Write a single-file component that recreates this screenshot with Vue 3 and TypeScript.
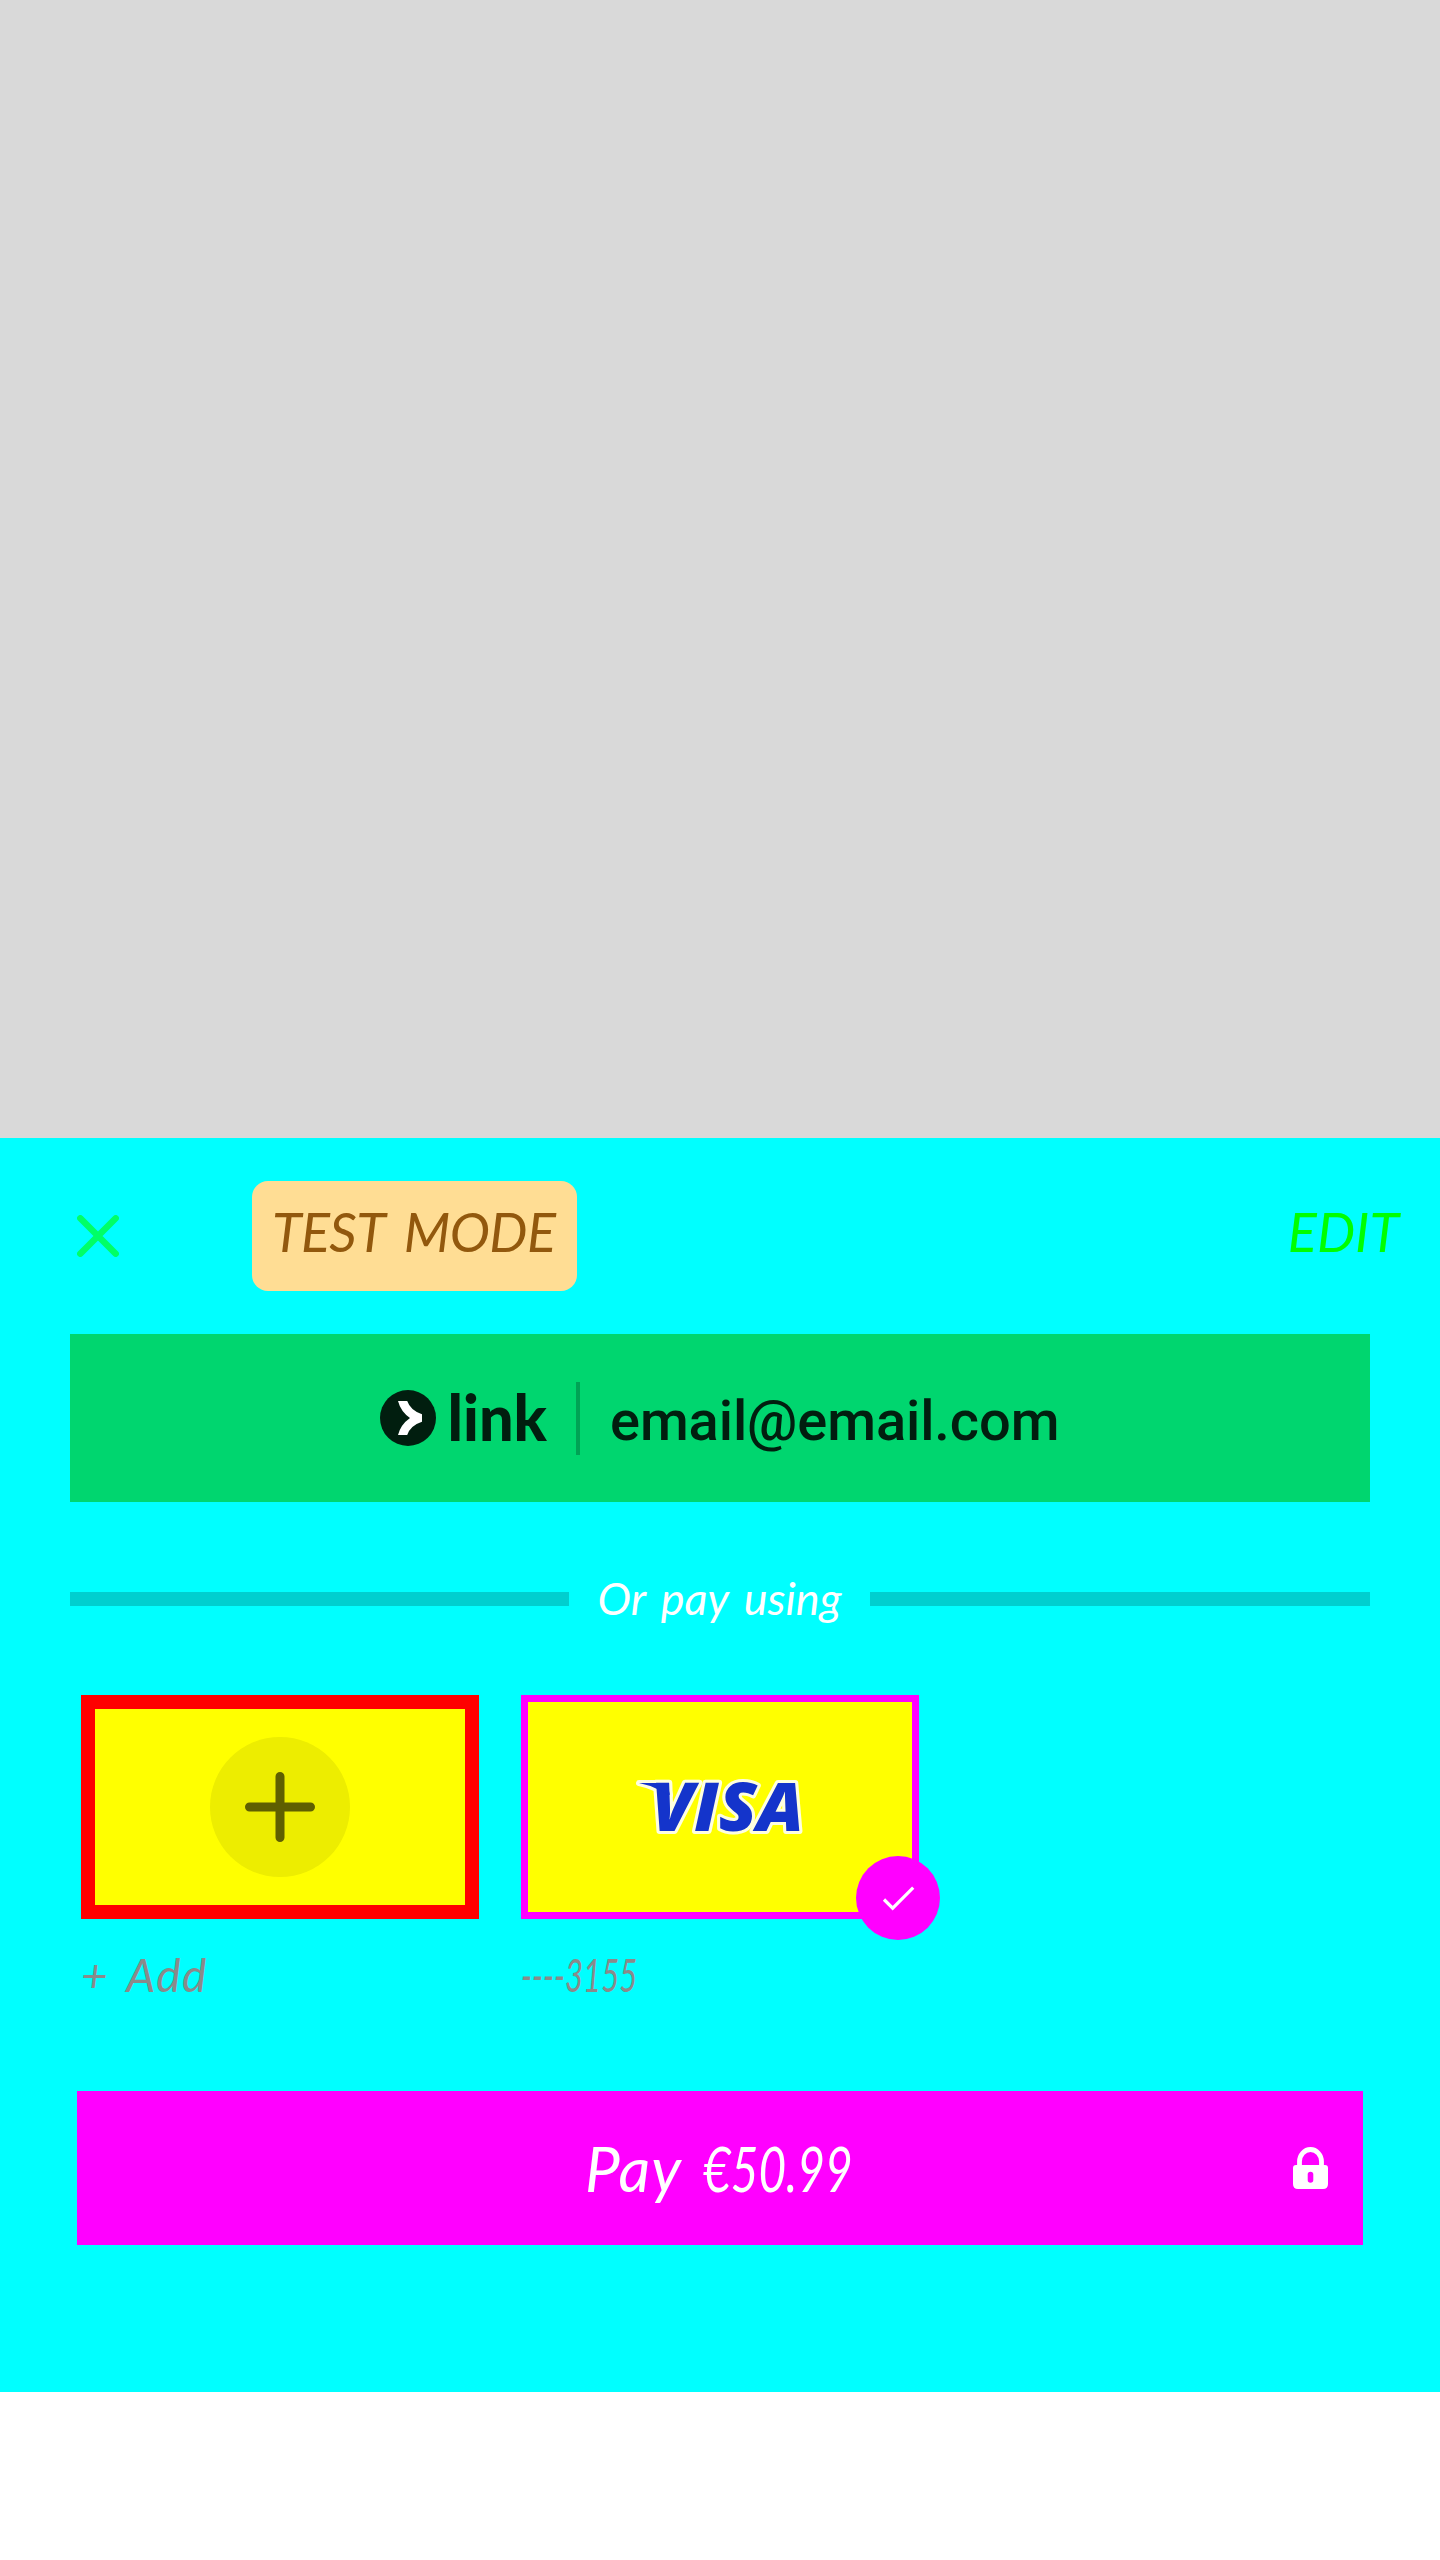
<script setup lang="ts">
interface Method {
  id: string
  label: string
  selected: boolean
}

const email = 'email@email.com'
const amount = '€50.99'
const methods: Method[] = [
  { id: 'add', label: '+ Add', selected: false },
  { id: 'visa-card', label: '----3155', selected: true },
]
</script>

<template>
  <main class="screen">
    <section class="sheet">
      <header class="topbar">
        <svg class="close" viewBox="0 0 42 42" aria-label="Close">
          <path d="M3.3 3.3 38.7 38.7M38.7 3.3 3.3 38.7" />
        </svg>
        <span class="test-badge hand">TEST MODE</span>
        <span class="edit hand">EDIT</span>
      </header>

      <div class="link-button">
        <svg class="link-logo" viewBox="0 0 168 60" aria-label="link">
          <circle cx="28" cy="30" r="28" fill="#011e0f" />
          <path d="M18 13h9.200q3.300 9.500 14.800 13.200v7.600q-11.500 3.700-14.800 13.200h-9.200q2.700-10.500 12-17-9.300-6.500-12-17z" fill="#fff" />
          <text x="67.500" y="53" textLength="99.500" lengthAdjust="spacingAndGlyphs">link</text>
        </svg>
        <span class="divider"></span>
        <span class="email">{{ email }}</span>
      </div>

      <div class="separator">
        <span class="rule"></span>
        <span class="or hand">Or pay using</span>
        <span class="rule end"></span>
      </div>

      <div class="methods">
        <div v-for="m in methods" :key="m.id" class="method">
          <div class="card" :class="{ selected: m.selected }">
            <svg v-if="!m.selected" class="plus" viewBox="0 0 140 140">
              <circle cx="70" cy="70" r="70" fill="#eded00" />
              <path d="M70 39.500v61M39.500 70h61" />
            </svg>
            <template v-else>
              <svg class="visa" viewBox="0 0 170 60" aria-label="Visa">
                <path d="M4 6h24q4 0 5 4l2 8-13-6Q14 8 4 6z" class="wing" />
                <text x="16" y="54" textLength="153" lengthAdjust="spacingAndGlyphs">VISA</text>
                <path d="M4 6h24q4 0 5 4l2 8-13-6Q14 8 4 6z" fill="#1434cb" />
              </svg>
              <svg class="tick" viewBox="0 0 84 84">
                <circle cx="42" cy="42" r="42" fill="#f0f" />
                <path d="M28 43.500 36.700 52.200 57.200 31.700" />
              </svg>
            </template>
          </div>
          <span class="label hand" :class="m.id">{{ m.label }}</span>
        </div>
      </div>

      <div class="pay">
        <span class="pay-text hand">Pay</span>
        <span class="amount hand">{{ amount }}</span>
        <svg class="lock" viewBox="0 0 35 42">
          <path d="M6.500 20V14.500a11 12 0 0 1 22 0V20" fill="none" stroke="#fff" stroke-width="4.800" />
          <path fill-rule="evenodd" fill="#fff" d="M3 18h29q3 0 3 3v16q0 5-5 5H5q-5 0-5-5V21q0-3 3-3zM14.700 27.500v5.500a2.800 2.800 0 0 0 5.600 0v-5.500a2.800 2.800 0 0 0-5.600 0z" />
        </svg>
      </div>
    </section>
  </main>
</template>

<style>
body {
  margin: 0;
  background: #fff;
}
</style>

<style scoped>
.screen {
  width: 1440px;
  height: 2560px;
  padding-top: 1138px;
  box-sizing: border-box;
  background: linear-gradient(#d9d9d9 1138px, #fff 1138px);
}

.sheet {
  height: 1254px;
  background: #0ff;
  overflow: hidden;
}

.hand {
  font-family: Lato, "Liberation Sans", sans-serif;
  font-style: italic;
  font-weight: 400;
  white-space: nowrap;
}

.topbar {
  display: flex;
  align-items: center;
  height: 110px;
  margin: 43px 41px 43px 77px;
}

.close {
  width: 42px;
  height: 42px;
}

.close path {
  fill: none;
  stroke: #00ff66;
  stroke-width: 6.500;
  stroke-linecap: round;
}

.test-badge {
  width: 325px;
  height: 110px;
  margin-left: 133px;
  box-sizing: border-box;
  padding-left: 20px;
  border-radius: 16px;
  background: #ffdd94;
  color: #92580d;
  font-size: 54px;
  line-height: 101px;
  letter-spacing: -0.600px;
  word-spacing: 8px;
}

.edit {
  margin-left: auto;
  color: #0f0;
  font-size: 54px;
  line-height: 101px;
  height: 110px;
}

.link-button {
  display: flex;
  align-items: center;
  height: 168px;
  margin: 0 70px;
  padding-left: 310px;
  box-sizing: border-box;
  background: #00d66f;
}

.link-logo {
  width: 168px;
  height: 60px;
  overflow: visible;
}

.link-logo text {
  font: 900 64px Lato, sans-serif;
  fill: #011e0f;
}

.divider {
  width: 4px;
  height: 73px;
  margin: 0 30px 0 28px;
  background: #00a355;
}

.email {
  color: #011e0f;
  font: 500 56px/66px Roboto, sans-serif;
  letter-spacing: -0.080px;
  white-space: nowrap;
  padding-top: 5px;
}

.separator {
  display: flex;
  align-items: center;
  height: 56px;
  margin: 69px 70px 68px;
}

.rule {
  width: 499px;
  height: 14px;
  background: #00cfcf;
}

.rule.end {
  width: 500px;
}

.or {
  width: 301px;
  text-align: center;
  color: #fff;
  font-size: 45px;
  line-height: 54px;
  word-spacing: 5px;
  padding-bottom: 2px;
}

.methods {
  display: flex;
  gap: 42px;
  padding-left: 81px;
}

.method {
  width: 398px;
  height: 396px;
}

.card {
  position: relative;
  display: flex;
  align-items: center;
  justify-content: center;
  width: 398px;
  height: 224px;
  box-sizing: border-box;
  border: 14px solid #f00;
  background: #ff0;
}

.card.selected {
  border: 7px solid #f0f;
}

.plus {
  width: 140px;
  height: 140px;
}

.plus path {
  fill: none;
  stroke: #5f5f00;
  stroke-width: 9;
  stroke-linecap: round;
}

.visa {
  width: 170px;
  height: 60px;
  overflow: visible;
}

.visa text {
  font: italic 800 67px "Open Sans", sans-serif;
  fill: #1434cb;
  stroke: #ffffe0;
  stroke-width: 6;
  stroke-linejoin: round;
  paint-order: stroke;
}

.wing {
  fill: #1434cb;
  stroke: #ffffe0;
  stroke-width: 6;
  stroke-linejoin: round;
}

.tick {
  position: absolute;
  right: -28px;
  bottom: -28px;
  width: 84px;
  height: 84px;
}

.tick path {
  fill: none;
  stroke: #fff;
  stroke-width: 3.200;
}

.label {
  display: block;
  margin-top: 28px;
  color: #8a8a8a;
  font-size: 46px;
  line-height: 56px;
  transform-origin: left center;
}

.label.add {
  letter-spacing: 1.500px;
  word-spacing: 6px;
}

.label.visa-card {
  transform: scaleX(0.680);
}

.pay {
  display: flex;
  align-items: center;
  position: relative;
  height: 154px;
  margin: 0 77px;
  background: #f0f;
}

.pay-text {
  width: 118px;
  margin-left: 508px;
  color: #fff;
  font-size: 62px;
  letter-spacing: 1px;
  line-height: 72px;
}

.amount {
  color: #fff;
  font-size: 62px;
  line-height: 72px;
  transform: scaleX(0.770);
  transform-origin: left center;
}

.lock {
  position: absolute;
  right: 35px;
  top: 56px;
  width: 35px;
  height: 42px;
}
</style>
